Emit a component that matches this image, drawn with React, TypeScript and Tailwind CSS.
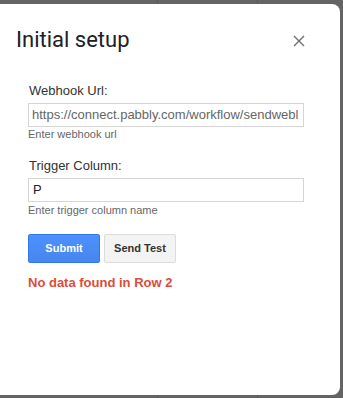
import React from "react";

export default function App() {
  const sans = { fontFamily: '"Liberation Sans", Arial, sans-serif' };
  return (
    <div
      className="w-[343px] h-[398px] overflow-hidden bg-[#646464] pt-[4px]"
      style={{
        ...sans,
        backgroundImage:
          "linear-gradient(to right, transparent 157px, #5a5a5a 157px, #5a5a5a 158px, transparent 158px, transparent 257px, #5a5a5a 257px, #5a5a5a 258px, transparent 258px)",
      }}
    >
      <div className="w-[340px] h-[391px] bg-white rounded-r-[8px] flex flex-col">
        <div className="flex items-center justify-between pl-[16px] pr-[35px] pt-[22px]">
          <h1
            className="text-[22px] leading-[28px] font-normal text-[#202124]"
            style={{ fontFamily: 'Roboto, "Open Sans", sans-serif' }}
          >
            Initial setup
          </h1>
          <svg width="12" height="12" viewBox="0 0 12 12" className="mt-[1px]">
            <path d="M1 1 L11 11 M11 1 L1 11" stroke="#6e6e6e" strokeWidth="1.4" />
          </svg>
        </div>

        <div className="pl-[28px] pt-[29px] flex flex-col items-start">
          <label className="pl-px text-[13px] leading-[16px] text-[#333]">Webhook Url:</label>
          <div className="mt-[4px] w-[276px] h-[24px] border border-[#d5d5d5] bg-white flex items-center pl-[3px] overflow-hidden whitespace-nowrap">
            <span className="text-[13px] leading-[16px] text-[#666]">
              https://connect.pabbly.com/workflow/sendwebl
            </span>
          </div>
          <div className="mt-[1px] text-[11px] leading-[13px] text-[#666]">Enter webhook url</div>

          <label className="mt-[17px] pl-px text-[13px] leading-[16px] text-[#333]">Trigger Column:</label>
          <div className="mt-[4px] w-[276px] h-[24px] border border-[#d5d5d5] bg-white flex items-center pl-[4px]">
            <span className="text-[13px] leading-[16px] text-[#222]">P</span>
          </div>
          <div className="mt-[2px] text-[11px] leading-[13px] text-[#666]">Enter trigger column name</div>

          <div className="mt-[17px] flex gap-[4px]">
            <button className="w-[72px] h-[29px] rounded-[2px] border border-[#3079ed] bg-gradient-to-b from-[#4d90fe] to-[#4787ed] text-white text-[11px] font-bold">
              Submit
            </button>
            <button className="w-[72px] h-[29px] rounded-[2px] border border-[#dcdcdc] bg-[#f3f3f3] text-[#333] text-[11px] font-bold">
              Send Test
            </button>
          </div>

          <div className="mt-[12px] text-[13px] leading-[16px] font-bold text-[#dd4b39]">No data found in Row 2</div>
        </div>
      </div>
    </div>
  );
}
